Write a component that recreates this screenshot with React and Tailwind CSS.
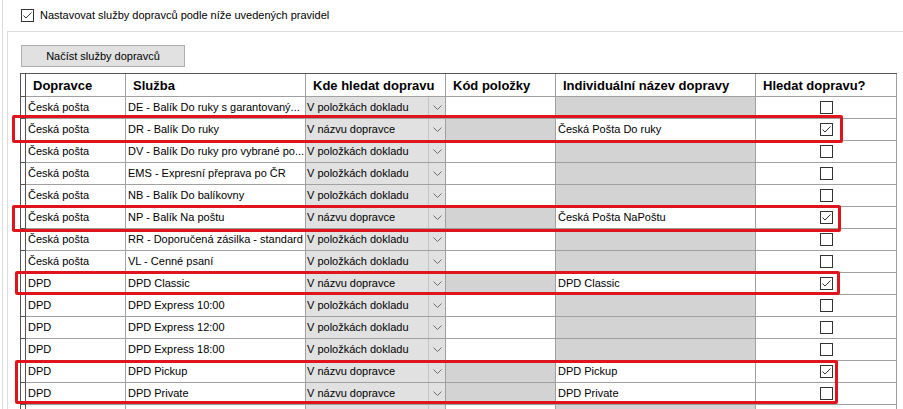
import { Fragment } from 'react'

const BY_ITEMS = 'V položkách dokladu'
const BY_NAME = 'V názvu dopravce'

const rows = [
  { carrier: 'Česká pošta', service: 'DE - Balík Do ruky s garantovaný...', mode: BY_ITEMS },
  { carrier: 'Česká pošta', service: 'DR - Balík Do ruky', mode: BY_NAME, name: 'Česká Pošta Do ruky', checked: true },
  { carrier: 'Česká pošta', service: 'DV - Balík Do ruky pro vybrané po...', mode: BY_ITEMS },
  { carrier: 'Česká pošta', service: 'EMS - Expresní přeprava po ČR', mode: BY_ITEMS },
  { carrier: 'Česká pošta', service: 'NB - Balík Do balíkovny', mode: BY_ITEMS },
  { carrier: 'Česká pošta', service: 'NP - Balík Na poštu', mode: BY_NAME, name: 'Česká Pošta NaPoštu', checked: true },
  { carrier: 'Česká pošta', service: 'RR - Doporučená zásilka - standard', mode: BY_ITEMS },
  { carrier: 'Česká pošta', service: 'VL - Cenné psaní', mode: BY_ITEMS },
  { carrier: 'DPD', service: 'DPD Classic', mode: BY_NAME, name: 'DPD Classic', checked: true },
  { carrier: 'DPD', service: 'DPD Express 10:00', mode: BY_ITEMS },
  { carrier: 'DPD', service: 'DPD Express 12:00', mode: BY_ITEMS },
  { carrier: 'DPD', service: 'DPD Express 18:00', mode: BY_ITEMS },
  { carrier: 'DPD', service: 'DPD Pickup', mode: BY_NAME, name: 'DPD Pickup', checked: true },
  { carrier: 'DPD', service: 'DPD Private', mode: BY_NAME, name: 'DPD Private' },
  { carrier: '', service: '', mode: '' },
]

const headers = ['Dopravce', 'Služba', 'Kde hledat dopravu', 'Kód položky', 'Individuální název dopravy', 'Hledat dopravu?']

// red hand-drawn highlight frames over the grid
const marks = [
  'left-[12px] top-[115px] h-[28px] w-[831px]',
  'left-[12px] top-[205px] h-[27px] w-[829px]',
  'left-[15px] top-[271px] h-[24px] w-[825px]',
  'left-[15px] top-[360px] h-[44px] w-[823px]',
]

function CheckBox({ checked }) {
  return (
    <span className="flex h-[13px] w-[13px] items-center justify-center border border-[#333] bg-white">
      {checked && (
        <svg width="11" height="11" viewBox="0 0 11 11">
          <polyline points="1.5,5.5 4,8 9.5,2.5" fill="none" stroke="#333" strokeWidth="1" />
        </svg>
      )}
    </span>
  )
}

function Chevron() {
  return (
    <svg width="9" height="5" viewBox="0 0 9 5">
      <polyline points="0.5,0.5 4.5,4.5 8.5,0.5" fill="none" stroke="#6d6d6d" strokeWidth="1" />
    </svg>
  )
}

const cell = 'flex h-[22px] items-center overflow-hidden whitespace-nowrap border-b border-r border-[#a0a0a0] text-[11px]'

export default function App() {
  return (
    <div className="relative h-[409px] w-[903px] overflow-hidden bg-white font-['Liberation_Sans',Arial,sans-serif] text-black">
      <div className="ml-[2px] h-full border-l border-[#dadada]">
        <div className="flex h-[31px] items-start pl-[18px] pt-[9px]">
          <CheckBox checked />
          <span className="ml-[6px] text-[11px] leading-[13px]">Nastavovat služby dopravců podle níže uvedených pravidel</span>
        </div>
        <div className="ml-[4px] h-full border-l border-t border-[#dcdcdc]">
          <div className="pl-[13px] pt-[13px]">
            <button
              type="button"
              className="flex h-[22px] w-[164px] items-center justify-center border border-[#adadad] bg-[#e1e1e1] text-[11px]"
            >
              Načíst služby dopravců
            </button>
          </div>
          <div className="ml-[12px] mt-[6px]">
            <div className="grid w-max grid-cols-[5px_100px_180px_140px_110px_200px_141px] border-l border-t border-[#555]">
              <div className="h-[23px] border-b border-r border-[#555]" />
              {headers.map((h) => (
                <div
                  key={h}
                  className="flex h-[23px] items-center whitespace-nowrap border-b border-r border-[#a0a0a0] pl-[7px] pt-px text-[13px] font-bold"
                >
                  {h}
                </div>
              ))}
              {rows.map((r, i) => {
                const byName = r.mode === BY_NAME
                return (
                  <Fragment key={i}>
                    <div className="h-[22px] border-b border-r border-[#555]" />
                    <div className={`${cell} pl-[2px]`}>{r.carrier}</div>
                    <div className={`${cell} pl-[2px]`}>{r.service}</div>
                    <div className={`${cell} bg-[#e1e1e1]`}>
                      <span className="flex-1 pl-[1px]">{r.mode}</span>
                      <span className="flex h-full w-[17px] items-center justify-center border-l border-[#c4c4c4]">
                        <Chevron />
                      </span>
                    </div>
                    <div className={`${cell} ${byName ? 'bg-[#d3d3d3]' : 'bg-white'}`} />
                    <div className={`${cell} pl-[2px] ${byName ? 'bg-white' : 'bg-[#d3d3d3]'}`}>{r.name}</div>
                    <div className={`${cell} justify-center`}>
                      <CheckBox checked={r.checked} />
                    </div>
                  </Fragment>
                )
              })}
            </div>
          </div>
        </div>
      </div>
      {marks.map((m) => (
        <div key={m} className={`pointer-events-none absolute rounded-[2px] border-[3px] border-[#e0141c] ${m}`} />
      ))}
    </div>
  )
}
